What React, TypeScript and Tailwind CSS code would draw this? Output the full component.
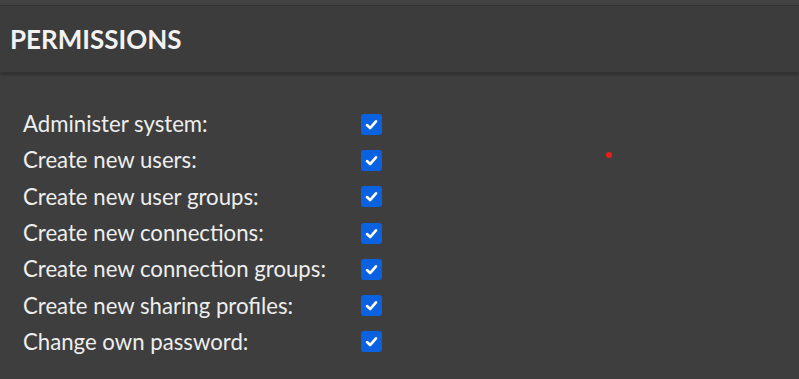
import React from "react";

const items = [
  "Administer system:",
  "Create new users:",
  "Create new user groups:",
  "Create new connections:",
  "Create new connection groups:",
  "Create new sharing profiles:",
  "Change own password:",
];

function Check() {
  return (
    <span className="flex h-[21px] w-[21px] items-center justify-center rounded-[3px] bg-[#0b62e0]">
      <svg viewBox="0 0 16 16" className="h-[15px] w-[15px]" fill="none">
        <path d="M3.2 8.6 L6.5 11.8 L12.8 4.6" stroke="#fff" strokeWidth="2.8" strokeLinecap="round" strokeLinejoin="round" />
      </svg>
    </span>
  );
}

export default function App() {
  return (
    <div className="relative h-[379px] w-[799px] overflow-hidden bg-[#3e3e3e] font-['Lato',sans-serif]">
      <div className="h-[5px] bg-[#424242]" />
      <div className="flex h-[68px] items-center border-y border-[#333333] bg-[#3c3c3c] pl-[10px] shadow-[0_2px_3px_rgba(0,0,0,0.25)]">
        <h2 className="text-[26px] font-bold leading-none text-[#f2f2f2]">PERMISSIONS</h2>
      </div>
      <div className="flex flex-col pl-[23px] pt-[33px]">
        {items.map((t) => (
          <div key={t} className="flex h-[36.3px] items-center">
            <span className="w-[338px] text-[22.2px] leading-none text-[#eeeeee]">{t}</span>
            <Check />
          </div>
        ))}
      </div>
      <span className="absolute left-[606px] top-[152px] h-[6px] w-[6px] rounded-full bg-[#e8201c]" />
    </div>
  );
}
